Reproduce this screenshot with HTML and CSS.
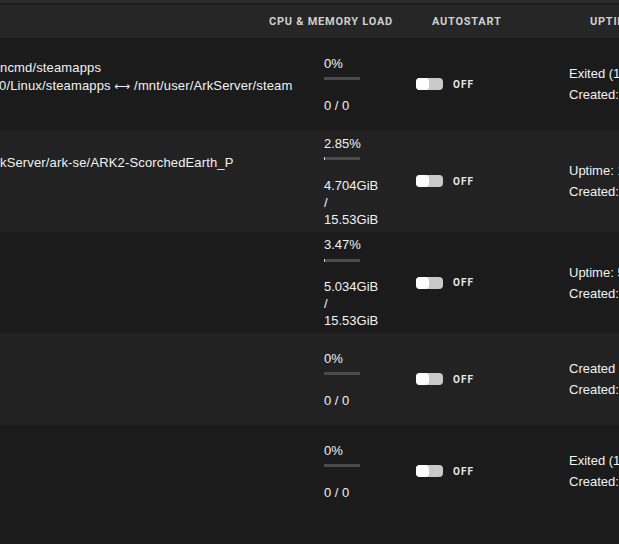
FILE: index.html
```html
<!DOCTYPE html>
<html>
<head>
<meta charset="utf-8">
<link rel="stylesheet" href="styles.css">
</head>
<body>
<div class="topbar"></div>
<div class="thead">
  <div></div>
  <div class="th">CPU &amp; MEMORY LOAD</div>
  <div class="th">AUTOSTART</div>
  <div class="th">UPTIME</div>
</div>

<div class="row dark">
  <div class="name name-a">
    <div class="line">ncmd/steamapps</div>
    <div class="line shift">0/Linux/steamapps <span class="arrow">⟷</span> /mnt/user/ArkServer/steamapps</div>
  </div>
  <div class="cpu">
    <div class="pct">0%</div>
    <div class="bar"><div class="fill" style="width:0%"></div></div>
    <div class="mem">0 / 0</div>
  </div>
  <div class="auto"><span class="toggle"><span class="knob"></span></span><span class="off">OFF</span></div>
  <div class="up"><div>Exited (1) 2 days ago</div><div>Created: 3 weeks ago</div></div>
</div>

<div class="row light">
  <div class="name name-b">
    <div class="line">kServer/ark-se/ARK2-ScorchedEarth_P</div>
  </div>
  <div class="cpu">
    <div class="pct">2.85%</div>
    <div class="bar"><div class="fill" style="width:2.85%"></div></div>
    <div class="mem">4.704GiB<br>/<br>15.53GiB</div>
  </div>
  <div class="auto"><span class="toggle"><span class="knob"></span></span><span class="off">OFF</span></div>
  <div class="up"><div>Uptime: 1 hour</div><div>Created: 3 weeks ago</div></div>
</div>

<div class="row dark">
  <div class="name"></div>
  <div class="cpu">
    <div class="pct">3.47%</div>
    <div class="bar"><div class="fill" style="width:3.47%"></div></div>
    <div class="mem">5.034GiB<br>/<br>15.53GiB</div>
  </div>
  <div class="auto"><span class="toggle"><span class="knob"></span></span><span class="off">OFF</span></div>
  <div class="up"><div>Uptime: 5 hours</div><div>Created: 3 weeks ago</div></div>
</div>

<div class="row light">
  <div class="name"></div>
  <div class="cpu">
    <div class="pct">0%</div>
    <div class="bar"><div class="fill" style="width:0%"></div></div>
    <div class="mem">0 / 0</div>
  </div>
  <div class="auto"><span class="toggle"><span class="knob"></span></span><span class="off">OFF</span></div>
  <div class="up"><div>Created</div><div>Created: 3 weeks ago</div></div>
</div>

<div class="row dark">
  <div class="name"></div>
  <div class="cpu">
    <div class="pct">0%</div>
    <div class="bar"><div class="fill" style="width:0%"></div></div>
    <div class="mem">0 / 0</div>
  </div>
  <div class="auto"><span class="toggle"><span class="knob"></span></span><span class="off">OFF</span></div>
  <div class="up"><div>Exited (1) 3 weeks ago</div><div>Created: 3 weeks ago</div></div>
</div>
</body>
</html>
```

FILE: styles.css
```css
html, body {
  margin: 0;
  padding: 0;
  background: #1b1b1b;
  overflow: hidden;
  width: 619px;
  height: 544px;
}
body {
  font-family: "Liberation Sans", Arial, sans-serif;
  font-size: 13px;
  color: #f2f2f2;
}
.topbar {
  height: 3px;
  background: #2b2b2b;
  border-bottom: 2px solid #1b1b1b;
}
.thead {
  display: grid;
  grid-template-columns: 269px 163px 158px 1fr;
  height: 33px;
  align-items: center;
  background: #262626;
  white-space: nowrap;
  overflow: hidden;
}
.th {
  font-family: Roboto, "Liberation Sans", sans-serif;
  font-weight: 700;
  font-size: 11px;
  letter-spacing: 0.75px;
  color: #cfcfcf;
  line-height: 13px;
}
.row {
  display: grid;
  grid-template-columns: 324px 92px 153px 1fr;
  min-height: 92px;
  padding: 4.5px 0 4px;
  box-sizing: border-box;
  align-items: center;
  white-space: nowrap;
  overflow: hidden;
}
.dark { background: #1b1b1b; }
.light { background: #222222; }
.name {
  align-self: start;
  margin-right: 31px;
  overflow: hidden;
  letter-spacing: 0.15px;
}
.name-a { padding-top: 16.5px; }
.name-b { padding-top: 19.5px; }
.line { line-height: 18px; }
.shift { margin-left: -1px; }
.arrow { font-family: "DejaVu Sans", sans-serif; font-size: 11px; }
.cpu { line-height: 17px; }
.bar {
  width: 36px;
  height: 3px;
  background: #4a4a4a;
  margin: 5.5px 0 16.5px;
}
.fill {
  height: 3px;
  background: #d0d0d0;
}
.auto {
  display: flex;
  align-items: center;
}
.toggle {
  width: 27px;
  height: 12px;
  border-radius: 4px;
  background: #c9c9c9;
  display: flex;
}
.knob {
  width: 13px;
  height: 12px;
  border-radius: 4px;
  background: #ffffff;
}
.off {
  margin-left: 10px;
  font-family: Roboto, "Liberation Sans", sans-serif;
  font-weight: 700;
  font-size: 10px;
  letter-spacing: 1px;
  color: #e8e8e8;
}
.up { line-height: 21px; }
```
